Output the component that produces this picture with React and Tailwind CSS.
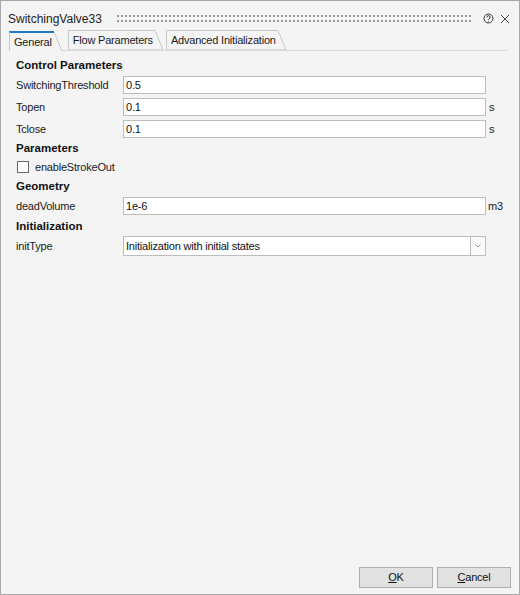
import React from "react";

const rows = [
  { label: "SwitchingThreshold", value: "0.5", unit: "" },
  { label: "Topen", value: "0.1", unit: "s" },
  { label: "Tclose", value: "0.1", unit: "s" },
];

function Tab({ label, active }) {
  return (
    <div className={"flex h-[20px] " + (active ? "" : "border-b border-[#d9d9d9]")}>
      <div
        className={
          "flex items-center border-l border-[#c9c9c9] pl-[4px] pr-[2px] " +
          (active ? "border-t-2 border-t-[#1f78c8] bg-[#f4f4f4]" : "border-t border-t-[#c9c9c9]")
        }
      >
        {label}
      </div>
      <svg width="8" height="20" className="shrink-0">
        <line x1="0" y1={active ? 1 : 0.5} x2="8" y2="20" stroke="#c9c9c9" strokeWidth="1" />
      </svg>
    </div>
  );
}

function Field({ value }) {
  return (
    <div className="h-[18px] w-[363px] border border-[#bdbdbd] bg-white pl-[2px] flex items-center text-[#111]">
      {value}
    </div>
  );
}

function Header({ children, className = "" }) {
  return (
    <div className={"h-[18px] flex items-center font-bold text-[11.5px] tracking-normal text-[#111] " + className}>
      {children}
    </div>
  );
}

export default function App() {
  return (
    <div className="w-[520px] h-[595px] border border-[#a9a9a9] bg-[#f4f4f4] flex flex-col font-['Liberation_Sans',Arial,sans-serif] text-[11px] tracking-[-0.2px] text-[#1a1a1a]">
      {/* title bar */}
      <div className="h-[30px] pt-[5px] flex items-center pl-[7px] pr-[9px]">
        <span className="text-[12px] tracking-normal text-[#222]">SwitchingValve33</span>
        <svg className="flex-1 ml-[15px] mr-[10px]" height="7">
          <defs>
            <pattern id="grip" width="4" height="7" patternUnits="userSpaceOnUse">
              <rect x="0" y="0" width="2" height="2" fill="#9a9a9a" />
              <rect x="0" y="5" width="2" height="2" fill="#9a9a9a" />
            </pattern>
          </defs>
          <rect width="100%" height="7" fill="url(#grip)" />
        </svg>
        <svg width="11" height="11" viewBox="0 0 11 11" className="mr-[6px]">
          <circle cx="5.5" cy="5.5" r="4.5" fill="none" stroke="#333" strokeWidth="1" />
          <path d="M3.9 4.3 A1.6 1.6 0 1 1 5.9 5.8 Q5.5 6 5.5 6.6" fill="none" stroke="#333" strokeWidth="1" />
          <circle cx="5.5" cy="8" r="0.6" fill="#333" />
        </svg>
        <svg width="10" height="10" viewBox="0 0 10 10">
          <path d="M1 1 L9 9 M9 1 L1 9" stroke="#444" strokeWidth="1" />
        </svg>
      </div>

      {/* tabs */}
      <div className="flex pl-[8px] pr-[12px]">
        <Tab label="General" active />
        <div className="flex-1 flex border-b border-[#d9d9d9] h-[20px] items-end">
          <div className="w-[6px]" />
          <Tab label="Flow Parameters" />
          <div className="w-[3px]" />
          <Tab label="Advanced Initialization" />
        </div>
      </div>

      {/* content */}
      <div className="flex-1 px-[15px] pt-[6px]">
        <Header>Control Parameters</Header>
        <div className="mt-[1px] flex flex-col gap-[4px]">
          {rows.map((r) => (
            <div key={r.label} className="flex items-center">
              <div className="w-[107px]">{r.label}</div>
              <Field value={r.value} />
              <span className="ml-[3px]">{r.unit}</span>
            </div>
          ))}
        </div>

        <Header className="mt-[2px]">Parameters</Header>
        <div className="mt-[2px] h-[14px] flex items-center">
          <div className="w-[12px] h-[12px] ml-[1px] border border-[#666] bg-white" />
          <span className="ml-[6px]">enableStrokeOut</span>
        </div>

        <Header className="mt-[4px]">Geometry</Header>
        <div className="mt-[1px] flex items-center">
          <div className="w-[107px]">deadVolume</div>
          <Field value="1e-6" />
          <span className="ml-[2px]">m3</span>
        </div>

        <Header className="mt-[3px]">Initialization</Header>
        <div className="flex items-center">
          <div className="w-[107px]">initType</div>
          <div className="h-[20px] w-[363px] border border-[#bdbdbd] bg-white flex">
            <div className="flex-1 pl-[2px] flex items-center text-[#111]">Initialization with initial states</div>
            <div className="w-[15px] border-l border-[#bdbdbd] bg-[#fafafa] flex items-center justify-center">
              <svg width="6" height="4" viewBox="0 0 6 4">
                <path d="M0.5 0.5 L3 3 L5.5 0.5" fill="none" stroke="#999" strokeWidth="1" />
              </svg>
            </div>
          </div>
        </div>
      </div>

      {/* footer */}
      <div className="flex justify-end gap-[4px] pr-[8px] pb-[6px]">
        <button className="w-[74px] h-[21px] border border-[#adadad] bg-[#e1e1e1] text-[#111] text-[11px]">
          <span className="underline">O</span>K
        </button>
        <button className="w-[74px] h-[21px] border border-[#adadad] bg-[#e1e1e1] text-[#111] text-[11px]">
          <span className="underline">C</span>ancel
        </button>
      </div>
    </div>
  );
}
